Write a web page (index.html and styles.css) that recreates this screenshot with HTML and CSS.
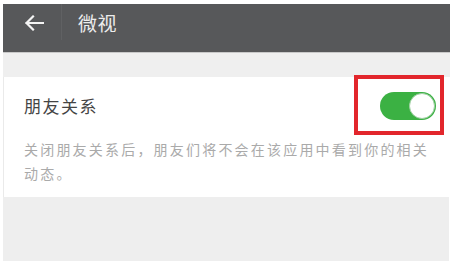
FILE: index.html
```html
<!DOCTYPE html>
<html lang="zh">
<head>
<meta charset="utf-8">
<link rel="stylesheet" href="styles.css">
</head>
<body>
<div class="page">
  <header class="bar">
    <span class="back">
      <svg width="20" height="16" viewBox="0 0 20 16"><path d="M19 8H2.5M9 1.5L2.5 8L9 14.5" fill="none" stroke="#f4f4f4" stroke-width="2.2" stroke-linecap="square"/></svg>
    </span>
    <span class="sep"></span>
    <span class="title">微视</span>
  </header>
  <div class="gap"></div>
  <section class="card">
    <div class="row">
      <span class="label">朋友关系</span>
      <span class="mark">
        <span class="toggle"><span class="knob"></span></span>
      </span>
    </div>
    <p class="desc">关闭朋友关系后，朋友们将不会在该应用中看到你的相关动态。</p>
  </section>
  <div class="rest"></div>
</div>
</body>
</html>
```
FILE: styles.css
```css
html, body { margin: 0; padding: 0; background: #fff; }
body { width: 450px; height: 261px; overflow: hidden; font-family: "Noto Sans CJK SC", "Noto Sans", sans-serif; }
.page { padding: 4px 0 0 3px; display: flex; flex-direction: column; height: 257px; }
.bar { height: 48px; background: #57585a; display: flex; align-items: flex-start; border-bottom: 1px solid #c9c9c9; }
.back { width: 20px; height: 16px; margin: 11px 0 0 21px; display: block; }
.back svg { display: block; }
.sep { width: 1px; height: 36px; background: #606163; margin: 0 0 0 17px; }
.title { color: #ececec; font-size: 19px; line-height: 22px; margin: 8px 0 0 16px; letter-spacing: 0.5px; }
.gap { height: 24px; background: #efefef; }
.card { background: #fff; padding: 0 0 0 20px; height: 120px; border-left: 1px solid #eaeaea; box-sizing: border-box; }
.row { display: flex; align-items: center; justify-content: space-between; height: 56px; }
.label { font-size: 17px; color: #444; letter-spacing: 1.5px; }
.mark { border: 4px solid #e2262c; width: 90px; height: 60px; margin: -2px 6px 0 0; align-self: flex-start; display: flex; align-items: flex-start; justify-content: flex-end; box-sizing: border-box; padding: 13px 4px 0 0; }
.toggle { width: 56px; height: 28px; border-radius: 14px; background: #3bb143; display: flex; justify-content: flex-end; align-items: center; }
.knob { width: 26px; height: 26px; border-radius: 50%; background: #fff; border: 1px solid #9fcfa2; margin-right: 1px; box-sizing: border-box; }
.desc { margin: 4px 0 0; font-size: 14px; color: #aaa; letter-spacing: 2.2px; line-height: 24px; width: 410px; }
.rest { flex: 1; background: #eeeeee; margin-right: 1px; }
```
